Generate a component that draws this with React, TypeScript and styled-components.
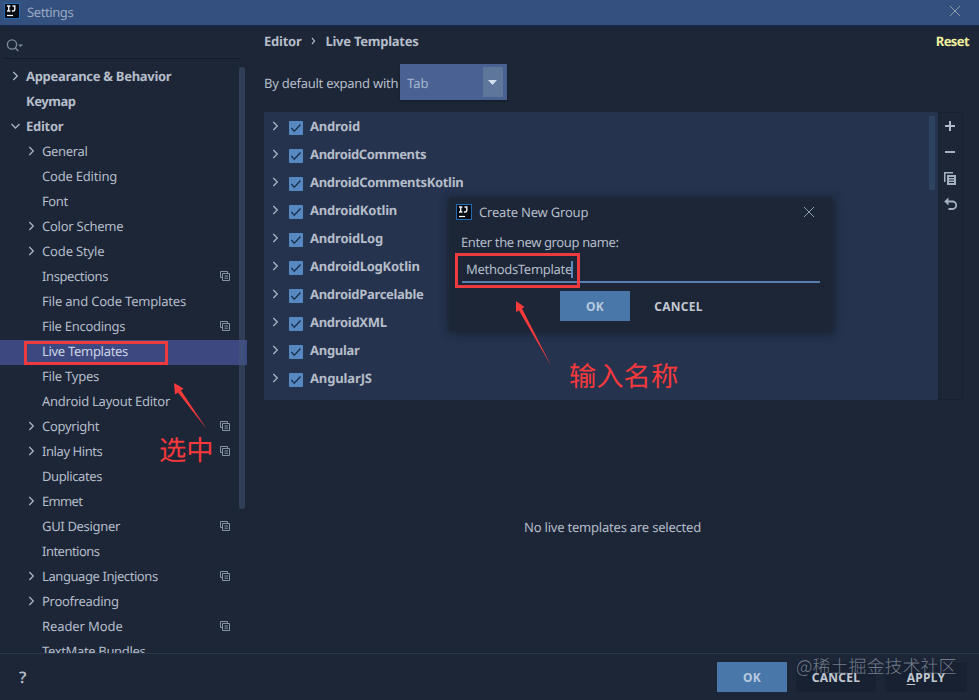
import React from "react";
import styled, { createGlobalStyle, css } from "styled-components";

const Global = createGlobalStyle`
  *, *::before, *::after { box-sizing: border-box; }
  body { margin: 0; background: #1c2637; }
`;

const sans = `"Noto Sans", "Noto Sans CJK SC", sans-serif`;

const Window = styled.div`
  position: relative;
  width: 979px;
  height: 700px;
  display: flex;
  flex-direction: column;
  overflow: hidden;
  background: #1c2637;
  color: #b5bdc9;
  font: 13px/20px ${sans};
  white-space: nowrap;
  text-rendering: geometricPrecision;
`;

const TitleBar = styled.header`
  height: 25px;
  flex: none;
  display: flex;
  align-items: center;
  padding: 0 18px 3px 4px;
  background: #34507f;
  color: #9aaac2;
  box-shadow: 0 1px 2px #152f55;
  z-index: 1;
`;

const TitleText = styled.span`
  flex: 1;
  margin-left: 7px;
  padding-top: 1px;
  letter-spacing: -0.45px;
  letter-spacing: -0.4px;
`;

const Body = styled.div`
  flex: 1;
  min-height: 0;
  display: flex;
`;

const Sidebar = styled.aside`
  width: 247px;
  flex: none;
  display: flex;
  flex-direction: column;
`;

const SearchBar = styled.div`
  height: 34px;
  flex: none;
  margin: 0 6px 6px 3px;
  padding: 13px 0 0 3px;
  border-bottom: 1px solid #141c29;
`;

const TreeArea = styled.div`
  position: relative;
  flex: 1;
  min-height: 0;
  overflow: hidden;
`;

const TreeRow = styled.div<{ $level: number; $selected?: boolean }>`
  height: 25px;
  display: flex;
  align-items: center;
  padding: 0 17px 3px ${(p) => (p.$level ? 26 : 10)}px;
  background: ${(p) => (p.$selected ? "#3d4881" : "transparent")};
  color: ${(p) => (p.$selected ? "#ccd4e4" : "inherit")};
`;

const Arrow = styled.span`
  width: 16px;
  flex: none;
  display: flex;
`;

const Text = styled.span<{ $bold?: boolean; $spacing?: number }>`
  letter-spacing: ${(p) => p.$spacing ?? -0.25}px;
  ${(p) =>
    p.$bold &&
    css`
      font-weight: 700;
    `}
`;

const TreeLabel = styled(Text)`
  flex: 1;
  margin-top: -1px;
`;

const SideScroll = styled.div`
  position: absolute;
  left: 239px;
  top: 2px;
  width: 6px;
  height: 442px;
  border-radius: 3px;
  background: rgba(67, 87, 119, 0.5);
`;

const Main = styled.main`
  flex: 1;
  min-width: 0;
  display: flex;
  flex-direction: column;
  padding-left: 17px;
`;

const Crumbs = styled.div`
  display: flex;
  align-items: center;
  height: 39px;
  padding: 0 10px 7px 0;
`;

const CrumbSep = styled.span`
  width: 24px;
  display: flex;
  justify-content: center;
`;

const Reset = styled.a`
  margin-left: auto;
  color: #f0ef9d;
  font-weight: 700;
  letter-spacing: -0.6px;
`;

const ExpandRow = styled.div`
  height: 36px;
  display: flex;
  align-items: center;
`;

const ExpandLabel = styled.span`
  width: 136px;
  padding-top: 1px;
  letter-spacing: -0.26px;
`;

const Select = styled.div`
  width: 107px;
  height: 36px;
  display: flex;
  align-items: center;
  justify-content: space-between;
  padding: 0 4px 0 7px;
  background: #4a6293;
  box-shadow: 0 1px 2px #131b28;
  color: #a5b6d0;
`;

const SelectValue = styled.span`
  padding-top: 2px;
`;

const SelectArrow = styled.span`
  width: 20px;
  height: 30px;
  display: grid;
  place-items: center start;
  padding-left: 5px;
  background: #5e7699;
`;

const ListArea = styled.section`
  display: flex;
  height: 288px;
  margin-top: 12px;
`;

const GroupList = styled.div`
  position: relative;
  width: 674px;
  background: #25334e;
`;

const GroupRow = styled.div`
  height: 28px;
  display: flex;
  align-items: center;
  padding-left: 6px;
`;

const Check = styled.span`
  width: 14px;
  height: 14px;
  margin: 4px 7px 0 3px;
  border-radius: 1px;
  background: #5689c2;
  display: flex;
`;

const ListScroll = styled.div`
  position: absolute;
  right: 3px;
  top: 4px;
  width: 6px;
  height: 74px;
  border-radius: 1px;
  background: #2e435f;
`;

const Tools = styled.div`
  width: 25px;
  border: 1px solid #182131;
  display: flex;
  flex-direction: column;
  align-items: center;
`;

const Tool = styled.span`
  width: 24px;
  height: 26px;
  padding-right: 1px;
  display: grid;
  place-items: center;
`;

const Empty = styled.div`
  flex: 1;
  display: flex;
  align-items: center;
  justify-content: center;
  padding: 0 18px 0 0;
  letter-spacing: -0.21px;
`;

const Footer = styled.footer`
  height: 47px;
  flex: none;
  display: flex;
  align-items: center;
  padding: 0 12px 0 19px;
  border-top: 1px solid #2b384c;
`;

const Help = styled.span`
  flex: 1;
  font-size: 16px;
  font-weight: 600;
`;

const Button = styled.button<{ $kind?: "primary" | "flat" | "dark"; $width?: number; $gap?: number }>`
  width: ${(p) => p.$width ?? 70}px;
  height: 30px;
  margin-left: ${(p) => p.$gap ?? 0}px;
  padding: 1px 0 0;
  border: 0;
  background: ${(p) => (p.$kind === "primary" ? "#4a77a9" : p.$kind === "dark" ? "#182131" : "transparent")};
  color: ${(p) => (p.$kind === "primary" ? "#b6c9df" : "#c1c8d1")};
  font: 700 12px/29px ${sans};
  letter-spacing: 0.3px;
`;

const Mnemonic = styled.span`
  text-decoration: underline;
  text-underline-offset: 2px;
`;

const Dialog = styled.div`
  position: absolute;
  left: 449px;
  top: 198px;
  width: 383px;
  height: 133px;
  display: flex;
  flex-direction: column;
  padding: 5px 12px 0 12px;
  background: #1c2637;
  box-shadow: 0 0 6px 1px #1c2637, 2px 2px 9px rgba(25, 35, 50, 0.8);
`;

const DialogHead = styled.div`
  height: 18px;
  margin-left: -5px;
  padding-right: 5px;
  display: flex;
  align-items: center;
`;

const DialogTitle = styled.span`
  flex: 1;
  margin-left: 7px;
  letter-spacing: -0.2px;
`;

const DialogLabel = styled.label`
  margin-top: 11px;
  letter-spacing: -0.37px;
`;

const Input = styled.div`
  height: 31px;
  display: flex;
  align-items: center;
  padding: 5px 0 0 4px;
  margin-left: 1px;
  border-bottom: 2px solid #587faf;
  letter-spacing: -0.3px;
`;

const Caret = styled.i`
  width: 2px;
  height: 17px;
  margin-left: -1px;
  background: #5e88bc;
`;

const DialogButtons = styled.div`
  display: flex;
  padding: 8px 0 0 99px;
`;

const RedBox = styled.div<{ $x: number; $y: number; $w: number; $h: number }>`
  position: absolute;
  left: ${(p) => p.$x}px;
  top: ${(p) => p.$y}px;
  width: ${(p) => p.$w}px;
  height: ${(p) => p.$h}px;
  border: 3px solid #ee3b40;
`;

const Note = styled.div<{ $x: number; $y: number }>`
  position: absolute;
  left: ${(p) => p.$x}px;
  top: ${(p) => p.$y}px;
  color: #f5393c;
  font: 27.3px/36px "Noto Sans CJK SC", sans-serif;
`;

const Pointer = styled.svg<{ $x: number; $y: number }>`
  position: absolute;
  left: ${(p) => p.$x}px;
  top: ${(p) => p.$y}px;
  fill: #f93a3c;
`;

const Watermark = styled.div`
  position: absolute;
  left: 796px;
  top: 654px;
  color: rgba(157, 166, 181, 0.68);
  font: 300 18px/24px "Noto Sans CJK SC", sans-serif;
`;

const Logo = () => (
  <svg width="16" height="16" viewBox="0 0 16 16">
    <rect x=".5" y=".5" width="15" height="15" fill="#080b12" stroke="#236ab4" />
    <path d="M3 3h3.400M4.700 3v5M3 8h3.400M8.500 3h3M10.800 3v3.500Q10.800 8 9.200 8H7.900" fill="none" stroke="#eef2f6" strokeWidth="1.4" />
    <path d="M3 12.500h6" stroke="#fff" strokeWidth="1.200" />
  </svg>
);

const Close = () => (
  <svg width="12" height="12" viewBox="0 0 12 12" fill="none" stroke="#8e9cae">
    <path d="M1 1l10 10M11 1L1 11" />
  </svg>
);

const Chevron = ({ open }: { open?: boolean }) => (
  <svg width="10" height="10" viewBox="0 0 10 10" fill="none" stroke="#a9b4c4" strokeWidth="1.3">
    <path d={open ? "M1.500 3l4 4 4-4" : "M3.300 1l4 4-4 4"} />
  </svg>
);

const ProjectMark = () => (
  <svg width="10" height="10" viewBox="0 0 10 10" fill="none" stroke="#8793a5">
    <path d="M2.500 6.500h-2v-6h7v2M2.500 2.500h7v7h-7zM4.500 5h3.500M4.500 7.200h3.500" />
  </svg>
);

type Item = {
  label: string;
  spacing: number;
  level?: 0 | 1;
  arrow?: "open" | "closed";
  mark?: boolean;
  selected?: boolean;
};

const items: Item[] = [
  { label: "Appearance & Behavior", spacing: -0.3, level: 0, arrow: "closed" },
  { label: "Keymap", spacing: -0.45, level: 0 },
  { label: "Editor", spacing: -0.28, level: 0, arrow: "open" },
  { label: "General", spacing: -0.35, arrow: "closed" },
  { label: "Code Editing", spacing: -0.2 },
  { label: "Font", spacing: -0.4 },
  { label: "Color Scheme", spacing: -0.25, arrow: "closed" },
  { label: "Code Style", spacing: -0.15, arrow: "closed" },
  { label: "Inspections", spacing: -0.4, mark: true },
  { label: "File and Code Templates", spacing: -0.19 },
  { label: "File Encodings", spacing: -0.28, mark: true },
  { label: "Live Templates", spacing: -0.3, selected: true },
  { label: "File Types", spacing: -0.22 },
  { label: "Android Layout Editor", spacing: -0.25 },
  { label: "Copyright", spacing: -0.3, arrow: "closed", mark: true },
  { label: "Inlay Hints", spacing: -0.42, arrow: "closed", mark: true },
  { label: "Duplicates", spacing: -0.4 },
  { label: "Emmet", spacing: -0.65, arrow: "closed" },
  { label: "GUI Designer", spacing: -0.33, mark: true },
  { label: "Intentions", spacing: -0.52 },
  { label: "Language Injections", spacing: -0.42, arrow: "closed", mark: true },
  { label: "Proofreading", spacing: -0.29, arrow: "closed" },
  { label: "Reader Mode", spacing: -0.1, mark: true },
  { label: "TextMate Bundles", spacing: -0.35 },
];

const groups: { name: string; spacing: number }[] = [
  { name: "Android", spacing: -0.22 },
  { name: "AndroidComments", spacing: -0.37 },
  { name: "AndroidCommentsKotlin", spacing: -0.33 },
  { name: "AndroidKotlin", spacing: -0.23 },
  { name: "AndroidLog", spacing: -0.2 },
  { name: "AndroidLogKotlin", spacing: -0.25 },
  { name: "AndroidParcelable", spacing: -0.32 },
  { name: "AndroidXML", spacing: -0.3 },
  { name: "Angular", spacing: -0.28 },
  { name: "AngularJS", spacing: -0.13 },
];

export default function App() {
  return (
    <>
      <Global />
      <Window>
        <TitleBar>
          <Logo />
          <TitleText>Settings</TitleText>
          <Close />
        </TitleBar>
        <Body>
          <Sidebar>
            <SearchBar>
              <svg width="18" height="14" viewBox="0 0 18 14" fill="none" stroke="#7f8c9e" strokeWidth="1.3">
                <circle cx="6" cy="5.500" r="4.600" />
                <path d="M9.300 9l3 3" />
                <path d="M12 5.500h5l-2.500 2.600z" fill="#7f8c9e" stroke="none" />
              </svg>
            </SearchBar>
            <TreeArea>
              {items.map((it) => (
                <TreeRow key={it.label} $level={it.level ?? 1} $selected={it.selected}>
                  <Arrow>{it.arrow && <Chevron open={it.arrow === "open"} />}</Arrow>
                  <TreeLabel $bold={it.level === 0} $spacing={it.spacing}>
                    {it.label}
                  </TreeLabel>
                  {it.mark && <ProjectMark />}
                </TreeRow>
              ))}
              <SideScroll />
            </TreeArea>
          </Sidebar>
          <Main>
            <Crumbs>
              <Text $bold>Editor</Text>
              <CrumbSep>
                <svg width="5" height="8" viewBox="0 0 5 8" fill="none" stroke="#a9b4c4" strokeWidth="1.2">
                  <path d="M1 1l2.600 3L1 7" />
                </svg>
              </CrumbSep>
              <Text $bold>Live Templates</Text>
              <Reset>Reset</Reset>
            </Crumbs>
            <ExpandRow>
              <ExpandLabel>By default expand with</ExpandLabel>
              <Select>
                <SelectValue>Tab</SelectValue>
                <SelectArrow>
                  <svg width="9" height="5" viewBox="0 0 9 5" fill="#d5e0ef">
                    <path d="M0 0h9L4.500 5z" />
                  </svg>
                </SelectArrow>
              </Select>
            </ExpandRow>
            <ListArea>
              <GroupList>
                {groups.map((g) => (
                  <GroupRow key={g.name}>
                    <Arrow>
                      <Chevron />
                    </Arrow>
                    <Check>
                      <svg width="14" height="14" viewBox="0 0 14 14" fill="none" stroke="#1c3454" strokeWidth="1.5">
                        <path d="M2.300 7l3 3.200 6.200-6.700" />
                      </svg>
                    </Check>
                    <Text $bold $spacing={g.spacing}>
                      {g.name}
                    </Text>
                  </GroupRow>
                ))}
                <ListScroll />
              </GroupList>
              <Tools>
                <Tool>
                  <svg width="10" height="10" stroke="#b0bac8" strokeWidth="2">
                    <path d="M0 5h10M5 0v10" />
                  </svg>
                </Tool>
                <Tool>
                  <svg width="10" height="10" stroke="#a4afbf" strokeWidth="2">
                    <path d="M0 5h10" />
                  </svg>
                </Tool>
                <Tool>
                  <svg width="12" height="13" viewBox="0 0 12 13">
                    <path d="M0 0h9v1.500H1.500V10H0z" fill="#a4afbf" />
                    <path d="M3 3h9v10H3z" fill="#a4afbf" />
                    <path d="M5 5.500h5M5 8h5M5 10.500h5" stroke="#1c2637" />
                  </svg>
                </Tool>
                <Tool>
                  <svg width="13" height="14" viewBox="0 0 13 14">
                    <path d="M3 4.500h5.500a3.500 3.500 0 0 1 0 7.500H4.500" fill="none" stroke="#a4afbf" strokeWidth="1.800" />
                    <path d="M4.500 .5v8L.2 4.500z" fill="#a4afbf" />
                  </svg>
                </Tool>
              </Tools>
            </ListArea>
            <Empty>No live templates are selected</Empty>
          </Main>
        </Body>
        <Footer>
          <Help>?</Help>
          <Button $kind="primary">OK</Button>
          <Button $kind="dark" $width={80} $gap={9}>
            CANCEL
          </Button>
          <Button $kind="dark" $width={82} $gap={9}>
            <Mnemonic>A</Mnemonic>PPLY
          </Button>
        </Footer>

        <Dialog>
          <DialogHead>
            <Logo />
            <DialogTitle>Create New Group</DialogTitle>
            <Close />
          </DialogHead>
          <DialogLabel>Enter the new group name:</DialogLabel>
          <Input>
            MethodsTemplate
            <Caret />
          </Input>
          <DialogButtons>
            <Button $kind="primary">OK</Button>
            <Button $width={77} $gap={10}>
              CANCEL
            </Button>
          </DialogButtons>
        </Dialog>

        <RedBox $x={24} $y={341} $w={144} $h={24} />
        <RedBox $x={455} $y={253} $w={125} $h={35} />
        <Pointer $x={170} $y={380} width="42" height="54">
          <path d="M4 3l9.500 5.500-2.500 2L37 49.500 8 12.500l-3 2z" />
        </Pointer>
        <Pointer $x={512} $y={298} width="44" height="72">
          <path d="M4 3l8.500 6-2.500 1.500L39.500 68.500 7 12.500l-3 1.500z" />
        </Pointer>
        <Note $x={159} $y={430}>选中</Note>
        <Note $x={569} $y={356}>输入名称</Note>
        <Watermark>@稀土掘金技术社区</Watermark>
      </Window>
    </>
  );
}
